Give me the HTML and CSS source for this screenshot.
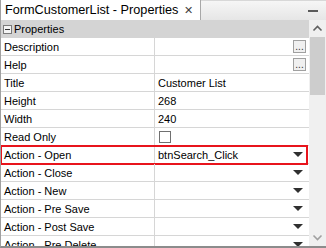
FILE: index.html
```html
<!DOCTYPE html>
<html lang="en">
<head>
    <meta charset="UTF-8">
    <title>FormCustomerList - Properties</title>
    <link rel="stylesheet" href="styles.css">
</head>
<body>
    <div class="panel">
        <div class="titlebar">
            <div class="tab">
                <span class="tab-title">FormCustomerList - Properties</span>
                <span class="tab-close">&#x2715;</span>
            </div>
            <div class="title-rest">
                <span class="minimize"></span>
            </div>
        </div>

        <div class="body">
            <div class="grid">
                <div class="group-row">
                    <span class="collapse-box"></span>
                    <span>Properties</span>
                </div>

                <div class="row">
                    <div class="label">Description</div>
                    <div class="value"><span class="dots">...</span></div>
                </div>
                <div class="row">
                    <div class="label">Help</div>
                    <div class="value"><span class="dots">...</span></div>
                </div>
                <div class="row">
                    <div class="label">Title</div>
                    <div class="value">Customer List</div>
                </div>
                <div class="row">
                    <div class="label">Height</div>
                    <div class="value">268</div>
                </div>
                <div class="row">
                    <div class="label">Width</div>
                    <div class="value">240</div>
                </div>
                <div class="row">
                    <div class="label">Read Only</div>
                    <div class="value"><span class="checkbox"></span></div>
                </div>
                <div class="row selected">
                    <div class="label">Action - Open</div>
                    <div class="value">btnSearch_Click<span class="drop"></span></div>
                </div>
                <div class="row">
                    <div class="label">Action - Close</div>
                    <div class="value"><span class="drop"></span></div>
                </div>
                <div class="row">
                    <div class="label">Action - New</div>
                    <div class="value"><span class="drop"></span></div>
                </div>
                <div class="row">
                    <div class="label">Action - Pre Save</div>
                    <div class="value"><span class="drop"></span></div>
                </div>
                <div class="row">
                    <div class="label">Action - Post Save</div>
                    <div class="value"><span class="drop"></span></div>
                </div>
                <div class="row">
                    <div class="label">Action - Pre Delete</div>
                    <div class="value"><span class="drop"></span></div>
                </div>
            </div>

            <div class="scrollbar">
                <svg class="arrow" width="17" height="17" viewBox="0 0 17 17">
                    <path d="M4.5 10.5 L8.5 6.5 L12.5 10.5" fill="none" stroke="#606060" stroke-width="1.6"/>
                </svg>
                <div class="track">
                    <div class="thumb"></div>
                </div>
                <svg class="arrow" width="17" height="17" viewBox="0 0 17 17">
                    <path d="M4.5 6.5 L8.5 10.5 L12.5 6.5" fill="none" stroke="#a0a0a0" stroke-width="1.6"/>
                </svg>
            </div>
        </div>
    </div>
</body>
</html>
```

FILE: styles.css
```css
* {
    margin: 0;
    padding: 0;
    box-sizing: border-box;
}

body {
    width: 326px;
    height: 248px;
    overflow: hidden;
    background: #ffffff;
    font-family: 'Liberation Sans', Arial, sans-serif;
    color: #000000;
}

.panel {
    width: 326px;
    height: 248px;
    display: flex;
    flex-direction: column;
    border-left: 1px solid #a0a0a0;
    border-bottom: 2px solid #8c8c8c;
    overflow: hidden;
}

/* Title strip */
.titlebar {
    height: 20px;
    display: flex;
    flex-shrink: 0;
}

.tab {
    width: 200px;
    display: flex;
    align-items: center;
    padding-left: 4px;
    background: #ffffff;
    border-right: 1px solid #a8a8a8;
}

.tab-title {
    font-size: 12.7px;
    white-space: nowrap;
}

.tab-close {
    font-size: 11px;
    color: #404040;
    margin-left: 6px;
}

.title-rest {
    flex: 1;
    display: flex;
    align-items: center;
    justify-content: flex-end;
    padding-right: 8px;
    background: linear-gradient(#f6f6f6, #e6e6e6);
    border-top: 1px solid #d8d8d8;
}

.minimize {
    width: 10px;
    height: 2px;
    background: #5a5a5a;
}

/* Grid and scrollbar */
.body {
    flex: 1;
    display: flex;
    min-height: 0;
}

.grid {
    width: 308px;
    display: flex;
    flex-direction: column;
    font-size: 11px;
}

.group-row {
    height: 18px;
    flex-shrink: 0;
    display: flex;
    align-items: center;
    gap: 2px;
    padding-left: 2px;
    background: #d4d4d4;
    font-size: 11px;
}

.collapse-box {
    width: 9px;
    height: 9px;
    border: 1px solid #7a7a7a;
    background: #f4f4f4;
    position: relative;
}

.collapse-box::after {
    content: '';
    position: absolute;
    left: 1px;
    right: 1px;
    top: 3px;
    height: 1px;
    background: #303030;
}

.row {
    height: 18px;
    flex-shrink: 0;
    display: flex;
    border-bottom: 1px solid #d6d6d6;
    position: relative;
}

.label {
    width: 154px;
    padding-left: 3px;
    display: flex;
    align-items: center;
    border-right: 1px solid #d6d6d6;
    white-space: nowrap;
}

.value {
    flex: 1;
    display: flex;
    align-items: center;
    padding-left: 3px;
    padding-right: 3px;
    white-space: nowrap;
}

.dots {
    margin-left: auto;
    width: 13px;
    height: 13px;
    border: 1px solid #a0a0a0;
    background: #f0f0f0;
    font-size: 10px;
    line-height: 12px;
    text-align: center;
    color: #303030;
}

.checkbox {
    width: 12px;
    height: 12px;
    border: 1px solid #707070;
    background: #ffffff;
    margin-left: 1px;
}

.drop {
    margin-left: auto;
    margin-right: 3px;
    width: 0;
    height: 0;
    border-left: 5px solid transparent;
    border-right: 5px solid transparent;
    border-top: 5px solid #303030;
}

.selected::after {
    content: '';
    position: absolute;
    left: -1px;
    right: 1px;
    top: -1px;
    bottom: -2px;
    border: 2px solid #e8141c;
    pointer-events: none;
}

.scrollbar {
    width: 17px;
    display: flex;
    flex-direction: column;
    background: #f0f0f0;
}

.arrow {
    flex-shrink: 0;
}

.track {
    flex: 1;
    padding: 0 1px;
}

.thumb {
    height: 58px;
    background: #cdcdcd;
}
```
